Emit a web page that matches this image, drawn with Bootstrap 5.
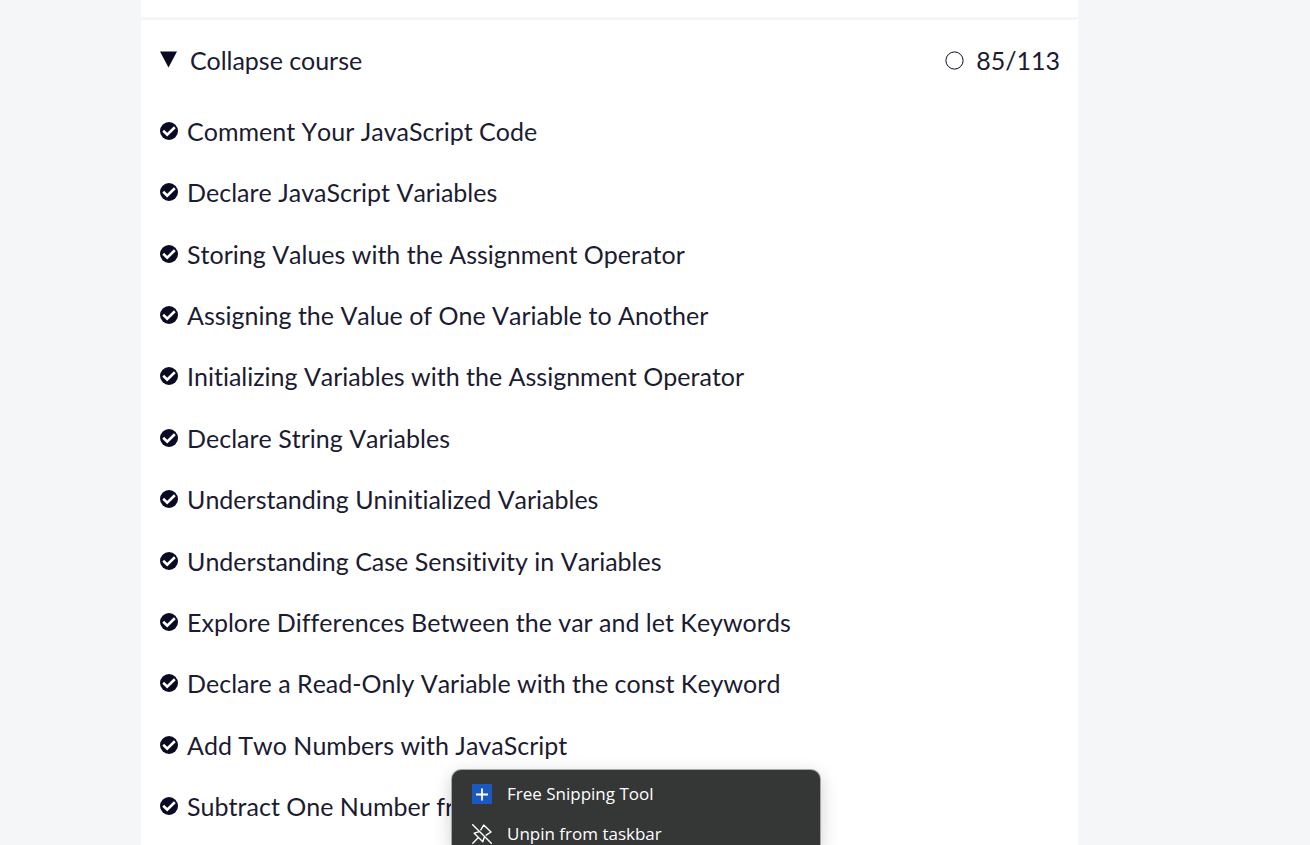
<!DOCTYPE html>
<html lang="en">
<head>
<meta charset="utf-8">
<meta name="viewport" content="width=device-width, initial-scale=1">
<title>Course</title>
<link href="https://cdn.jsdelivr.net/npm/bootstrap@5.3.0/dist/css/bootstrap.min.css" rel="stylesheet">
<style>
  body { background: #f5f6f7; color: #1b1b32; font-family: Lato, sans-serif; font-size: 25px; line-height: 38px;
    font-kerning: none; font-variant-ligatures: none; }
  .page-frame { padding-left: 141px; padding-right: 232px; }
  .previous-block { height: 17px; }
  .course-block { margin-top: 3px; padding: 21px 18px 32px 19px; }
  .toggle-btn { color: inherit; font-size: inherit; line-height: inherit; gap: 13px; }
  .toggle-btn svg { margin-bottom: 2px; }
  .progress-count { gap: 12px; }
  .lesson-list { margin-top: 33px; min-height: 713px; }
  .lesson-list a { color: inherit; gap: 9px; }
  .task-menu { left: 452px; bottom: 0; width: 368px; height: 75px; padding: 4px 0; background: #353636; color: #fff;
    border-radius: 9px 9px 0 0; box-shadow: 0 0 0 1px #a8a8a8, 0 5px 18px rgba(0,0,0,.22); font-family: "Open Sans", sans-serif; }
  .task-menu button { height: 40px; padding: 0 20px; gap: 15px; color: inherit; font-size: 17px; line-height: 24px; }
  .task-menu svg { flex: none; }
</style>
</head>
<body>
<svg width="0" height="0" class="position-absolute" aria-hidden="true">
  <symbol id="check" viewBox="0 0 18 18"><circle cx="9" cy="9" r="9" fill="#0a0a23"/><path d="M3.2 8.8 7.2 12.7 14.8 5.3" fill="none" stroke="#fff" stroke-width="2.6"/></symbol>
</svg>
<div class="position-relative vh-100 overflow-hidden">
  <main class="page-frame">
    <div class="previous-block bg-white"></div>
    <section class="course-block bg-white">
      <div class="d-flex justify-content-between align-items-center">
        <button type="button" class="toggle-btn btn border-0 p-0 d-flex align-items-center">
          <svg width="17" height="17" viewBox="0 0 17 17" aria-hidden="true"><path d="M0 .5H17L8.5 16.5Z" fill="#0a0a23"/></svg>
          Collapse course
        </button>
        <div class="progress-count d-flex align-items-center">
          <svg width="19" height="19" viewBox="0 0 19 19" aria-hidden="true"><circle cx="9.5" cy="9.5" r="8.6" fill="#fff" stroke="#0a0a23" stroke-width="1"/></svg>
          <span>85/113</span>
        </div>
      </div>
      <ul class="lesson-list list-unstyled mb-0 d-flex flex-column justify-content-between">
        <li><a href="#" class="d-flex align-items-center text-decoration-none"><svg width="18" height="18" aria-hidden="true"><use href="#check"/></svg>Comment Your JavaScript Code</a></li>
        <li><a href="#" class="d-flex align-items-center text-decoration-none"><svg width="18" height="18" aria-hidden="true"><use href="#check"/></svg>Declare JavaScript Variables</a></li>
        <li><a href="#" class="d-flex align-items-center text-decoration-none"><svg width="18" height="18" aria-hidden="true"><use href="#check"/></svg>Storing Values with the Assignment Operator</a></li>
        <li><a href="#" class="d-flex align-items-center text-decoration-none"><svg width="18" height="18" aria-hidden="true"><use href="#check"/></svg>Assigning the Value of One Variable to Another</a></li>
        <li><a href="#" class="d-flex align-items-center text-decoration-none"><svg width="18" height="18" aria-hidden="true"><use href="#check"/></svg>Initializing Variables with the Assignment Operator</a></li>
        <li><a href="#" class="d-flex align-items-center text-decoration-none"><svg width="18" height="18" aria-hidden="true"><use href="#check"/></svg>Declare String Variables</a></li>
        <li><a href="#" class="d-flex align-items-center text-decoration-none"><svg width="18" height="18" aria-hidden="true"><use href="#check"/></svg>Understanding Uninitialized Variables</a></li>
        <li><a href="#" class="d-flex align-items-center text-decoration-none"><svg width="18" height="18" aria-hidden="true"><use href="#check"/></svg>Understanding Case Sensitivity in Variables</a></li>
        <li><a href="#" class="d-flex align-items-center text-decoration-none"><svg width="18" height="18" aria-hidden="true"><use href="#check"/></svg>Explore Differences Between the var and let Keywords</a></li>
        <li><a href="#" class="d-flex align-items-center text-decoration-none"><svg width="18" height="18" aria-hidden="true"><use href="#check"/></svg>Declare a Read-Only Variable with the const Keyword</a></li>
        <li><a href="#" class="d-flex align-items-center text-decoration-none"><svg width="18" height="18" aria-hidden="true"><use href="#check"/></svg>Add Two Numbers with JavaScript</a></li>
        <li><a href="#" class="d-flex align-items-center text-decoration-none"><svg width="18" height="18" aria-hidden="true"><use href="#check"/></svg>Subtract One Number from</a></li>
      </ul>
    </section>
  </main>
  <div class="task-menu position-absolute">
    <button type="button" class="btn border-0 rounded-0 w-100 d-flex align-items-center">
      <svg width="20" height="20" viewBox="0 0 20 20" aria-hidden="true"><path d="M0 0H20V20H0Z" fill="#1b58bf"/><path d="M4 10.5H16M10 4.5V16.5" stroke="#fff" stroke-width="1.8"/></svg>
      Free Snipping Tool
    </button>
    <button type="button" class="btn border-0 rounded-0 w-100 d-flex align-items-center">
      <svg width="20" height="20" viewBox="0 0 20 20" fill="none" stroke="#fff" stroke-width="1.4" stroke-linejoin="round" stroke-linecap="round" aria-hidden="true"><path d="M.7.7 19.3 19.3M8.8 5.8 11.7 1 19 8 14.2 11.2M6.5 7.8 2.2 9.2 10.8 17.8 12.2 13.5M6.4 13.6.8 19.2"/></svg>
      Unpin from taskbar
    </button>
  </div>
</div>
<script src="https://cdn.jsdelivr.net/npm/bootstrap@5.3.0/dist/js/bootstrap.bundle.min.js"></script>
</body>
</html>
